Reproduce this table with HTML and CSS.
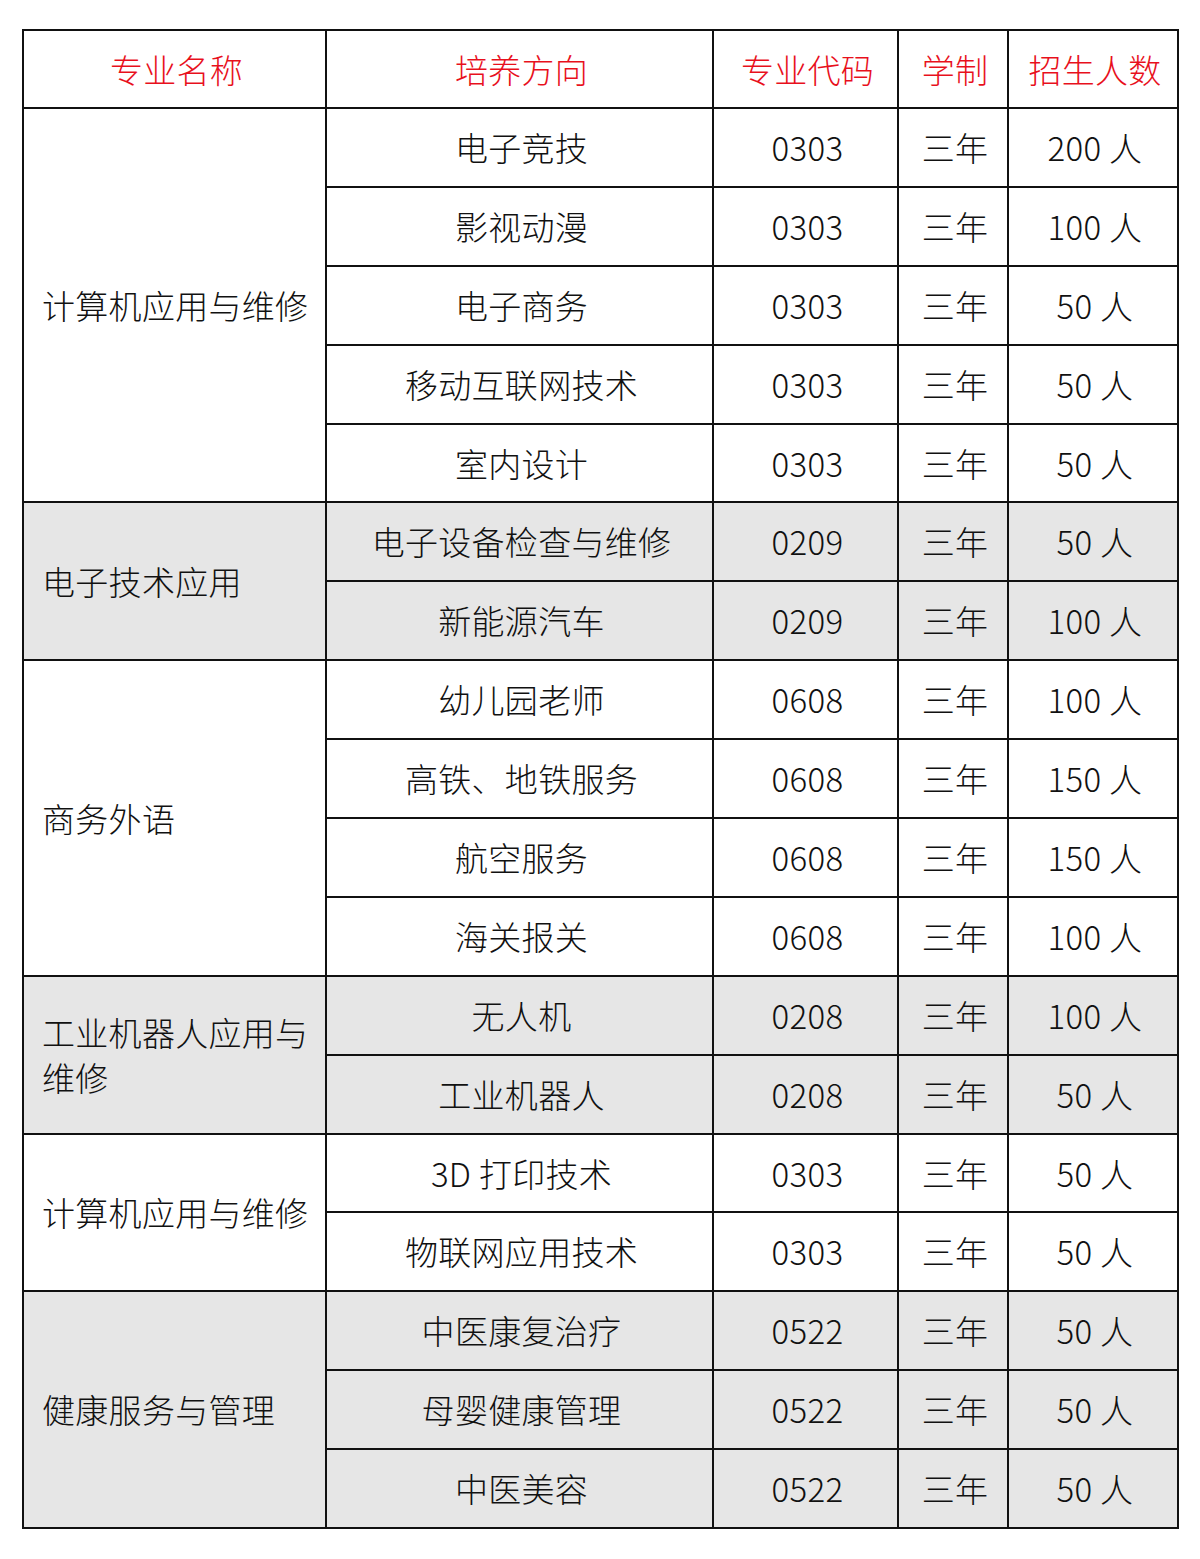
FILE: index.html
```html
<!DOCTYPE html>
<html lang="zh-CN">
<head>
<meta charset="utf-8">
<title>招生专业</title>
<link rel="stylesheet" href="styles.css">
</head>
<body>
<div class="page">
<table class="majors">
<colgroup>
<col class="c1"><col class="c2"><col class="c3"><col class="c4"><col class="c5">
</colgroup>
<thead>
<tr><th>专业名称</th><th>培养方向</th><th>专业代码</th><th>学制</th><th>招生人数</th></tr>
</thead>
<tbody>
<tr><td class="name" rowspan="5">计算机应用与维修</td><td>电子竞技</td><td>0303</td><td>三年</td><td>200 人</td></tr>
<tr><td>影视动漫</td><td>0303</td><td>三年</td><td>100 人</td></tr>
<tr><td>电子商务</td><td>0303</td><td>三年</td><td>50 人</td></tr>
<tr><td>移动互联网技术</td><td>0303</td><td>三年</td><td>50 人</td></tr>
<tr><td>室内设计</td><td>0303</td><td>三年</td><td>50 人</td></tr>
</tbody>
<tbody class="gray">
<tr><td class="name" rowspan="2">电子技术应用</td><td>电子设备检查与维修</td><td>0209</td><td>三年</td><td>50 人</td></tr>
<tr><td>新能源汽车</td><td>0209</td><td>三年</td><td>100 人</td></tr>
</tbody>
<tbody>
<tr><td class="name" rowspan="4">商务外语</td><td>幼儿园老师</td><td>0608</td><td>三年</td><td>100 人</td></tr>
<tr><td>高铁、地铁服务</td><td>0608</td><td>三年</td><td>150 人</td></tr>
<tr><td>航空服务</td><td>0608</td><td>三年</td><td>150 人</td></tr>
<tr><td>海关报关</td><td>0608</td><td>三年</td><td>100 人</td></tr>
</tbody>
<tbody class="gray">
<tr><td class="name" rowspan="2">工业机器人应用与维修</td><td>无人机</td><td>0208</td><td>三年</td><td>100 人</td></tr>
<tr><td>工业机器人</td><td>0208</td><td>三年</td><td>50 人</td></tr>
</tbody>
<tbody>
<tr><td class="name" rowspan="2">计算机应用与维修</td><td>3D 打印技术</td><td>0303</td><td>三年</td><td>50 人</td></tr>
<tr><td>物联网应用技术</td><td>0303</td><td>三年</td><td>50 人</td></tr>
</tbody>
<tbody class="gray">
<tr><td class="name" rowspan="3">健康服务与管理</td><td>中医康复治疗</td><td>0522</td><td>三年</td><td>50 人</td></tr>
<tr><td>母婴健康管理</td><td>0522</td><td>三年</td><td>50 人</td></tr>
<tr><td>中医美容</td><td>0522</td><td>三年</td><td>50 人</td></tr>
</tbody>
</table>
</div>
</body>
</html>
```
FILE: styles.css
```css
html, body {
  margin: 0;
  padding: 0;
  background: #ffffff;
}
.page {
  padding: 29px 0 0 22px;
}
.majors {
  border-collapse: collapse;
  table-layout: fixed;
  width: 1155px;
  font-family: "Noto Sans CJK SC", "Noto Sans", sans-serif;
  font-size: 33px;
  letter-spacing: 0.3px;
  font-weight: 300;
  color: #111111;
}
.c1 { width: 303px; }
.c2 { width: 387px; }
.c3 { width: 185px; }
.c4 { width: 110px; }
.c5 { width: 170px; }
.majors th,
.majors td {
  border: 2px solid #111111;
  height: 78.9px;
  padding: 0 0 0 4px;
  text-align: center;
  vertical-align: middle;
  line-height: 45px;
  box-sizing: border-box;
}
.majors th {
  font-weight: 300;
  color: #e8101c;
  height: 78px;
}
.majors td.name {
  text-align: left;
  padding: 0 4px 0 18px;
}
.gray td {
  background: #e6e6e6;
}
```
